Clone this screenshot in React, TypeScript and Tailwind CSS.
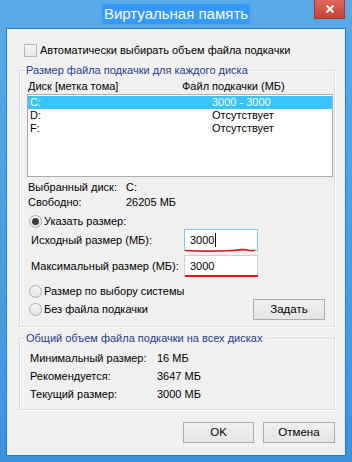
import React from "react";

function CheckBox() {
  return (
    <span className="w-[13px] h-[13px] border border-[#b4b4b4] bg-gradient-to-b from-[#f6f6f6] to-[#e6e6e6] shrink-0" />
  );
}

function Radio({ checked }: { checked?: boolean }) {
  return (
    <span className="w-[13px] h-[13px] rounded-full border border-[#a8a8a8] bg-gradient-to-b from-[#f6f6f6] to-[#e4e4e4] shrink-0 flex items-center justify-center">
      {checked && <span className="w-[7px] h-[7px] rounded-full bg-[#3c3c3c]" />}
    </span>
  );
}

function WinButton({ children, className }: { children: React.ReactNode; className?: string }) {
  return (
    <button
      className={
        "h-[21px] border border-[#acacac] bg-gradient-to-b from-[#f0f0f0] to-[#e5e5e5] text-[11.5px] text-black leading-none " +
        (className ?? "")
      }
    >
      {children}
    </button>
  );
}

const drives = [
  { name: "C:", size: "3000 - 3000", selected: true },
  { name: "D:", size: "Отсутствует" },
  { name: "F:", size: "Отсутствует" },
];

export default function App() {
  return (
    <div className="w-[352px] h-[462px] bg-gradient-to-b from-[#5aaae9] to-[#3d92de] font-['Liberation_Sans',sans-serif] text-[11px] text-black select-none whitespace-nowrap">
      {/* title bar */}
      <div className="relative h-[28px] flex justify-center pt-[4px]">
        <span className="h-[20px] px-[2px] bg-[#3399ff] text-white text-[15px] leading-[20px]">Виртуальная память</span>
        <div className="absolute top-0 right-[7px] w-[31px] h-[19px] border border-[#a13a2e] border-t-0 bg-gradient-to-b from-[#e0685b] to-[#c64235] flex items-center justify-center">
          <svg width="10" height="8" viewBox="0 0 10 8">
            <path d="M1.5 0.5 L8.5 7.5 M8.5 0.5 L1.5 7.5" stroke="#fff" strokeWidth="2" />
          </svg>
        </div>
      </div>

      {/* client area */}
      <div className="mx-[6px] h-[428px] border border-[#1f80d8] bg-[#f0f0f0] flex flex-col">
        <div className="mt-[15px] ml-[17px] h-[13px] flex items-center gap-[3px]">
          <CheckBox />
          <span className="leading-[13px]">Автоматически выбирать объем файла подкачки</span>
        </div>

        <fieldset className="mt-[6px] ml-[12px] mr-[10px] border border-[#dcdcdc] shadow-[inset_1px_1px_0_#fff,1px_1px_0_#fff] pb-[6px]">
          <legend className="ml-[5px] px-[1px] leading-[14px] text-[#1c3c8c]">Размер файла подкачки для каждого диска</legend>
          <div className="mt-[2px] pl-[8px] flex leading-[14px]">
            <span className="w-[154px]">Диск [метка тома]</span>
            <span>Файл подкачки (МБ)</span>
          </div>
          <div className="mt-[1px] ml-[7px] mr-[1px] h-[83px] border border-[#acacac] bg-white pt-[1px]">
            {drives.map((d) => (
              <div
                key={d.name}
                className={"h-[13px] flex leading-[13px] pl-[2px] " + (d.selected ? "bg-[#38c3fd] text-white" : "")}
              >
                <span className="w-[182px]">{d.name}</span>
                <span>{d.size}</span>
              </div>
            ))}
          </div>

          <div className="mt-[3px] pl-[8px] flex leading-[15px]">
            <span className="w-[98px]">Выбранный диск:</span>
            <span>C:</span>
          </div>
          <div className="pl-[8px] flex leading-[15px]">
            <span className="w-[98px]">Свободно:</span>
            <span>26205 МБ</span>
          </div>

          <div className="mt-[5px] ml-[9px] h-[13px] flex items-center gap-[2px]">
            <Radio checked />
            <span className="leading-[13px]">Указать размер:</span>
          </div>

          <div className="mt-[1px] pl-[11px] flex items-center h-[22px]">
            <span className="w-[153px]">Исходный размер (МБ):</span>
            <div className="relative">
              <div className="w-[74px] h-[22px] border border-[#80c8f0] bg-white pl-[5px] flex items-center">
                <span>3000</span>
                <span className="w-[1px] h-[14px] bg-black ml-[1px]" />
              </div>
              <svg className="absolute left-0 top-[18px]" width="74" height="6" viewBox="0 0 74 6">
                <path d="M1 3.5 C 15 4.5, 30 4.5, 45 3.8 S 58 1.5, 63 3 S 68 3.5, 71 3.2" stroke="#e8141e" strokeWidth="1.6" fill="none" />
              </svg>
            </div>
          </div>

          <div className="mt-[4px] pl-[11px] flex items-center h-[22px]">
            <span className="w-[153px]">Максимальный размер (МБ):</span>
            <div className="relative">
              <div className="w-[74px] h-[22px] border border-[#cfcfcf] bg-white pl-[5px] flex items-center">
                <span>3000</span>
              </div>
              <div className="absolute left-[1px] right-0 top-[20px] h-[2px] bg-[#e8141e]" />
            </div>
          </div>

          <div className="mt-[8px] ml-[9px] h-[13px] flex items-center gap-[2px]">
            <Radio />
            <span className="leading-[13px]">Размер по выбору системы</span>
          </div>

          <div className="ml-[9px] mr-[9px] h-[21px] mt-[1px] flex items-center">
            <Radio />
            <span className="ml-[2px] leading-[13px] flex-1">Без файла подкачки</span>
            <WinButton className="w-[72px]">Задать</WinButton>
          </div>
        </fieldset>

        <fieldset className="mt-[4px] ml-[12px] mr-[10px] border border-[#dcdcdc] shadow-[inset_1px_1px_0_#fff,1px_1px_0_#fff] pb-[6px]">
          <legend className="ml-[5px] px-[1px] leading-[14px] text-[#1c3c8c]">Общий объем файла подкачки на всех дисках</legend>
          <div className="mt-[4px] pl-[10px]">
            {[
              ["Минимальный размер:", "16 МБ"],
              ["Рекомендуется:", "3647 МБ"],
              ["Текущий размер:", "3000 МБ"],
            ].map(([k, v]) => (
              <div key={k} className="h-[18px] flex items-center">
                <span className="w-[127px]">{k}</span>
                <span>{v}</span>
              </div>
            ))}
          </div>
        </fieldset>

        <div className="mt-[12px] mr-[10px] flex justify-end gap-[9px]">
          <WinButton className="w-[71px]">OK</WinButton>
          <WinButton className="w-[72px]">Отмена</WinButton>
        </div>
      </div>
    </div>
  );
}
